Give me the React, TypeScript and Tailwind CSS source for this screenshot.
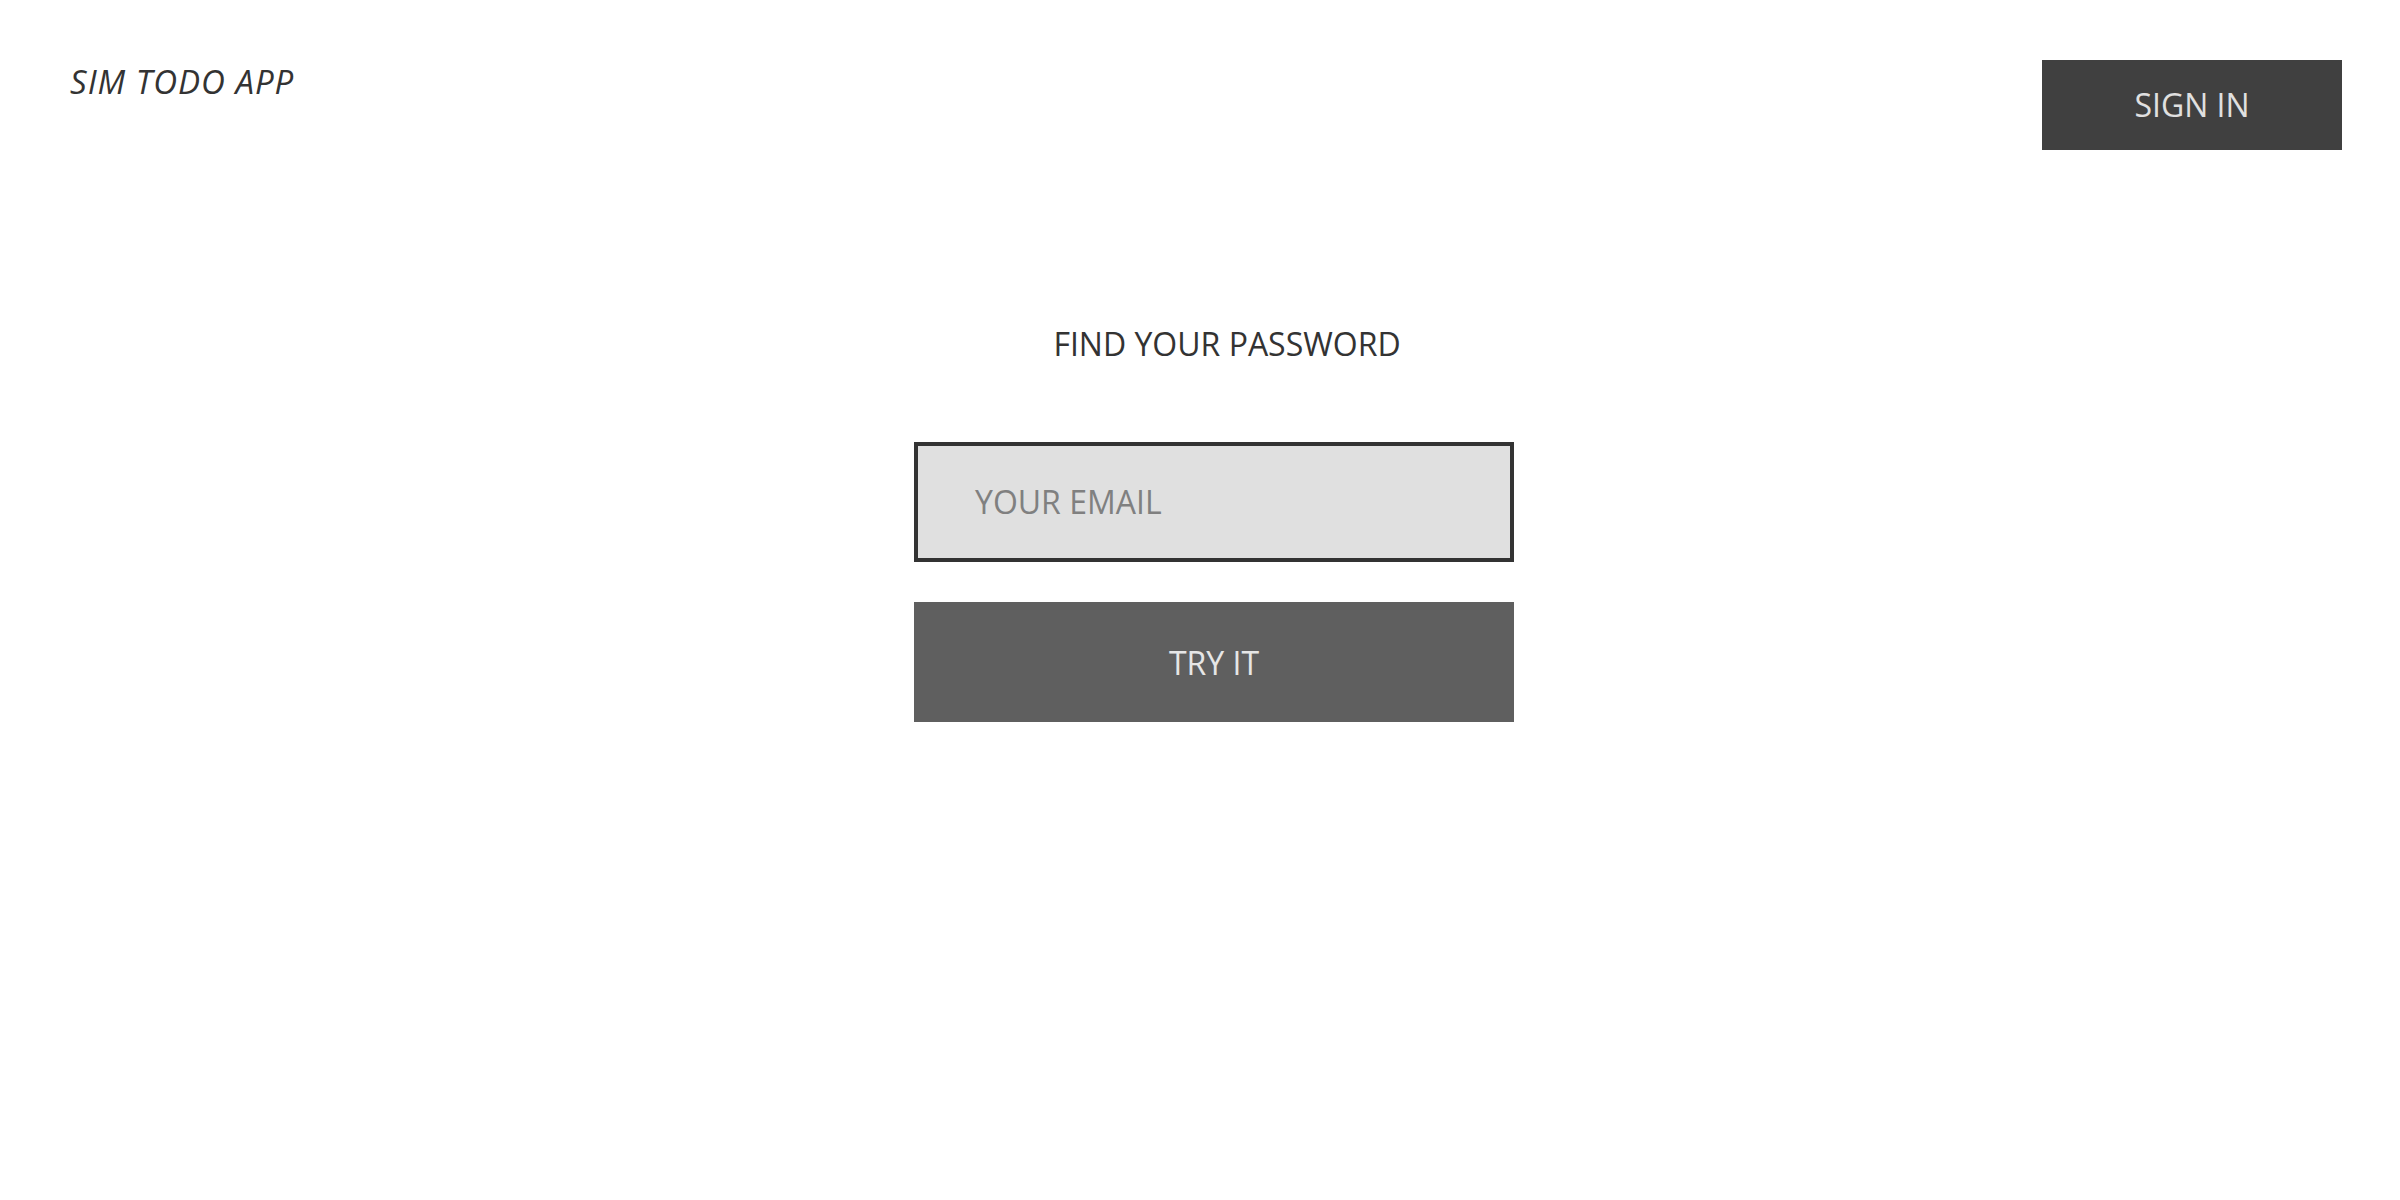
export default function App() {
  return (
    <div className="min-h-screen w-full bg-white" style={{ fontFamily: '"Open Sans", "Noto Sans", sans-serif' }}>
      <header className="flex items-start justify-between pl-[70px] pr-[58px] pt-[60px]">
        <div className="mt-[5px] text-[33px] leading-[33px] tracking-[1px] italic text-[#333333]">SIM TODO APP</div>
        <button className="flex h-[90px] w-[300px] items-center justify-center bg-[#404040] text-[32px] text-[#e0e0e0]">
          SIGN IN
        </button>
      </header>

      <main className="flex flex-col items-center">
        <h1 className="mt-[178px] pl-[54px] text-[32px] leading-[32px] font-normal text-[#333333]">
          FIND YOUR PASSWORD
        </h1>

        <div className="mt-[82px] flex flex-col gap-[40px] pl-[28px]">
          <div className="flex h-[120px] w-[600px] items-center border-4 border-[#333333] bg-[#e0e0e0] pb-[1px] pl-[57px] text-[32px] text-[#808080]">
            YOUR EMAIL
          </div>
          <button className="flex h-[120px] w-[600px] items-center justify-center bg-[#5f5f5f] pt-[2px] text-[32px] text-[#e6e6e6]">
            TRY IT
          </button>
        </div>
      </main>
    </div>
  );
}
